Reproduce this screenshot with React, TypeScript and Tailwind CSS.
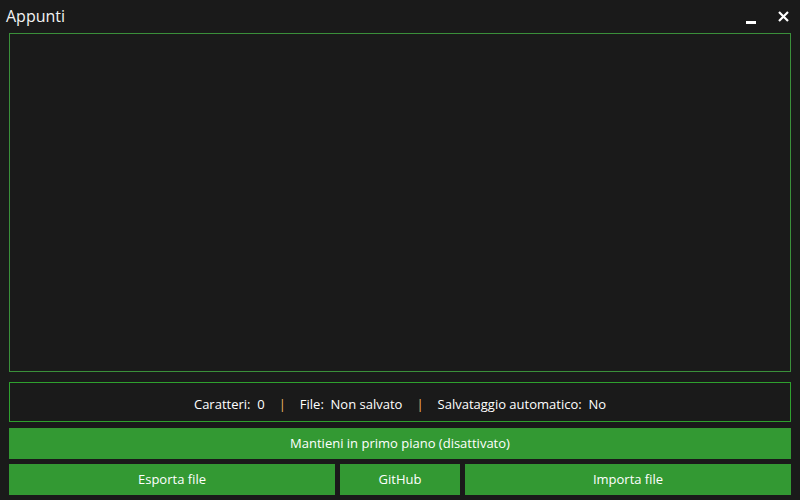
import React, { useState } from 'react';

const App: React.FC = () => {
  const [text, setText] = useState('');

  return (
    <div
      className="w-[800px] h-[500px] bg-[#1a1a1a] text-white flex flex-col px-[9px] pb-[5px] overflow-hidden"
      style={{ fontFamily: '"Open Sans", "Noto Sans", sans-serif' }}
    >
      {/* title bar */}
      <div className="h-[33px] flex items-center justify-between -mx-[9px] pl-[6px] pr-[11px]">
        <span className="text-[16px] text-[#f2f2f2] -mt-[2px]">Appunti</span>
        <div className="flex items-center gap-[22px]">
          <svg width="10" height="10" viewBox="0 0 10 10" className="mt-[6px]">
            <rect x="0" y="6" width="10" height="3" fill="#ffffff" />
          </svg>
          <svg width="11" height="11" viewBox="0 0 11 11">
            <path d="M1 1 L10 10 M10 1 L1 10" stroke="#ffffff" strokeWidth="2.2" />
          </svg>
        </div>
      </div>

      <textarea
        value={text}
        onChange={(e) => setText(e.target.value)}
        className="h-[339px] w-full bg-[#1a1a1a] border border-[#3a8f3a] outline-none resize-none text-[14px] p-2 text-white"
      />

      <div className="mt-[10px] h-[40px] border border-[#2ea02e] flex items-center justify-center gap-[14px] text-[13px] text-white pt-[5px]">
        <span>Caratteri:&nbsp;&nbsp;0</span>
        <span className="text-[#f4b868]">|</span>
        <span>File:&nbsp;&nbsp;Non salvato</span>
        <span className="text-[#f4b868]">|</span>
        <span>Salvataggio automatico:&nbsp;&nbsp;No</span>
      </div>

      <button className="mt-[6px] h-[31px] w-full bg-[#339933] text-[13px] text-white">
        Mantieni in primo piano (disattivato)
      </button>

      <div className="mt-[5px] h-[31px] flex gap-[5px] text-[13px] text-white">
        <button className="w-[326px] bg-[#339933]">Esporta file</button>
        <button className="w-[120px] bg-[#339933]">GitHub</button>
        <button className="flex-1 bg-[#339933]">Importa file</button>
      </div>
    </div>
  );
};

export default App;
